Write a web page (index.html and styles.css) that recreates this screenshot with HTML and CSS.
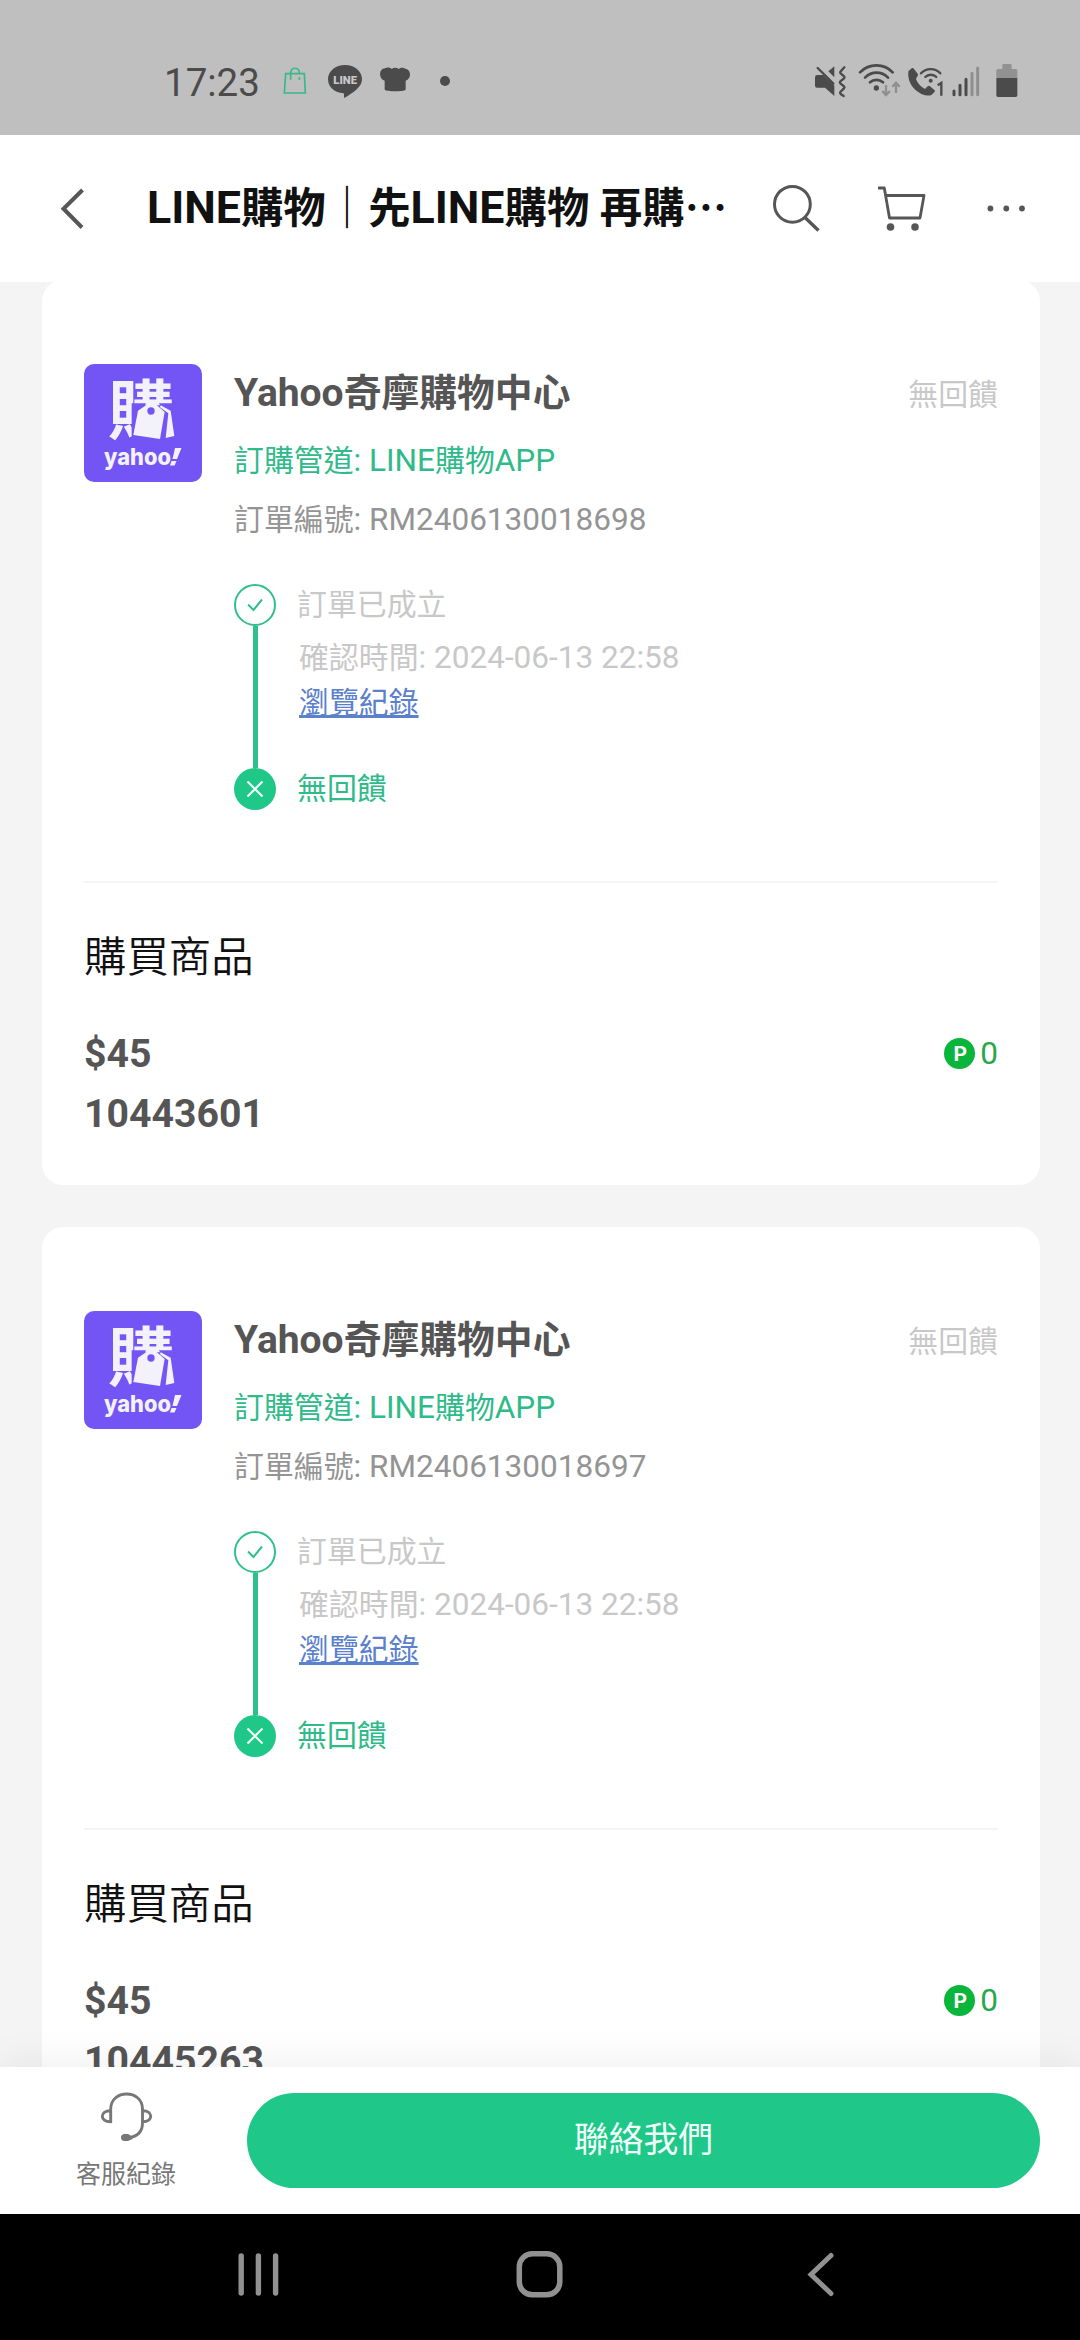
FILE: index.html
```
<!DOCTYPE html>
<html lang="zh-Hant">
<head>
<meta charset="UTF-8">
<meta name="viewport" content="width=device-width, initial-scale=1.0">
<title>LINE購物</title>
<link rel="stylesheet" href="styles.css">
</head>
<body>
    <div class="status-bar">
        <div class="clock">17:23</div>
        <svg class="ic-bag" width="26" height="40" viewBox="426 60 78 120">
            <path d="M437 101H493L496 159H433Z" fill="none" stroke="#37b98a" stroke-width="5"/>
            <path d="M452 119V99C452 80 478 80 478 99M478 111V119" fill="none" stroke="#37b98a" stroke-width="5"/>
        </svg>
        <svg class="ic-line" width="36" height="40" viewBox="561 60 108 120">
            <path d="M615 75C643 75 666 93 666 118C666 141 640 158 613 174C611 170 613 164 611 160C584 159 564 141 564 118C564 93 587 75 615 75Z" fill="#4b4b4b"/>
            <text class="line-word" x="580" y="132" textLength="71" lengthAdjust="spacingAndGlyphs">LINE</text>
        </svg>
        <svg class="ic-hat" width="32" height="40" viewBox="717 60 96 120">
            <path d="M734 149V122C715 117 716 86 735 85C742 81 751 83 755 87C761 82 770 82 776 87C782 82 791 82 796 86C814 88 815 116 797 122V149C790 155 741 155 734 149Z" fill="#4b4b4b"/>
        </svg>
        <svg class="ic-dot" width="12" height="40" viewBox="897 60 36 120"><circle cx="915" cy="123" r="15" fill="#4b4b4b"/></svg>
        <div class="status-right">
            <svg width="34" height="40" viewBox="70 60 102 120">
                <path d="M80 105H98L131 137V168L103 143H79Q73 143 73 137V112Q73 105 80 105Z" fill="#4b4b4b"/>
                <path d="M113 94L131 79V112Z" fill="#4b4b4b"/>
                <path d="M81 84L128 131" stroke="#4b4b4b" stroke-width="7" stroke-linecap="round"/>
                <path d="M161 82L150 94Q147 97 150 100L160 109Q163 112 160 115L149 124Q146 127 149 130L160 139Q163 142 160 145L149 156Q147 159 150 162L159 168" fill="none" stroke="#4b4b4b" stroke-width="7" stroke-linecap="round"/>
            </svg>
            <svg class="ic-wifi" width="43" height="40" viewBox="201 60 129 120">
                <g fill="none" stroke="#4b4b4b" stroke-width="8" stroke-linecap="round">
                    <path d="M207 97C234 69 279 69 305 97M222 113C242 93 272 93 291 113M237 127C248 117 265 117 276 127"/>
                </g>
                <circle cx="256" cy="144" r="8" fill="#4b4b4b"/>
                <path d="M285 135V163M274 153L285 165L297 153M315 159V130M304 140L315 128L326 140" fill="none" stroke="#8f8f8f" stroke-width="7"/>
            </svg>
            <svg class="ic-call" width="38" height="40" viewBox="349 60 114 120">
                <path d="M353 94L363 85Q367 83 370 87L381 101Q384 105 380 109L376 117Q382 135 403 147L411 139Q414 136 418 139L432 151Q434 154 431 157L423 164Q412 170 392 162Q349 139 353 94Z" fill="#4b4b4b"/>
                <path d="M391 100C405 83 435 83 449 100M404 111C412 102 429 102 437 111" fill="none" stroke="#4b4b4b" stroke-width="7" stroke-linecap="round"/>
                <circle cx="420" cy="122" r="6" fill="#4b4b4b"/>
                <path d="M441 136L452 129V167" fill="none" stroke="#4b4b4b" stroke-width="7"/>
            </svg>
            <svg class="ic-signal" width="28" height="40" viewBox="485 60 84 120" stroke-width="9" stroke-linecap="round">
                <path d="M491 153V164M509 136V164M527 118V164" stroke="#4b4b4b"/>
                <path d="M545 100V164M562 84V164" stroke="#8f8f8f"/>
            </svg>
            <svg class="ic-battery" width="22" height="40" viewBox="617 60 66 120">
                <path d="M636 87V75Q636 72 640 72H660Q664 72 664 75V87H677Q681 87 681 92V114H618V92Q618 87 622 87Z" fill="#929292"/>
                <path d="M618 114H681V166Q681 171 676 171H623Q618 171 618 166Z" fill="#4b4b4b"/>
            </svg>
        </div>
    </div>

    <div class="header">
        <svg class="ic-back" width="30" height="50" viewBox="58 184 30 50">
            <path d="M82.5 190L63.5 208.7L82 227.5" fill="none" stroke="#565656" stroke-width="4"/>
        </svg>
        <div class="title"><span class="en">LINE</span>購物｜先<span class="en">LINE</span>購物 再購<span class="dots">…</span></div>
        <div class="header-icons">
            <svg width="54" height="50" viewBox="770 184 54 50" fill="none" stroke="#565656">
                <circle cx="792.4" cy="204.3" r="17.9" stroke-width="3"/>
                <path d="M805 217.5L818.5 230.5" stroke-width="3.4"/>
            </svg>
            <svg class="ic-cart" width="54" height="50" viewBox="874 184 54 50">
                <path d="M878 188H884.3L889.5 218H920L924 195.5H886" fill="none" stroke="#565656" stroke-width="2.8" stroke-linejoin="round"/>
                <circle cx="890.5" cy="227" r="3.8" fill="#565656"/>
                <circle cx="915" cy="227" r="3.8" fill="#565656"/>
            </svg>
            <svg class="ic-more" width="44" height="50" viewBox="984 184 44 50" fill="#565656">
                <circle cx="990.4" cy="208.5" r="2.9"/>
                <circle cx="1006.3" cy="208.5" r="2.9"/>
                <circle cx="1022" cy="208.5" r="2.9"/>
            </svg>
        </div>
    </div>

    <div class="content">
        <div class="card">
            <div class="order">
                <svg class="logo" width="118" height="118" viewBox="0 0 118 118">
                    <rect width="118" height="118" rx="10" fill="#7355f6"/>
                    <text class="logo-char" x="24" y="70" textLength="66" lengthAdjust="spacingAndGlyphs">購</text>
                    <g transform="scale(.3333) translate(-42 -42)">
                        <path d="M185 160H330V280H185Z" fill="#7355f6"/>
                        <path d="M230 150H262L270 166H226Z" fill="#f3f1fa"/>
                        <path d="M229 165L260 165L284 186L270 267L190 255L204 182Z" fill="#f3f1fa"/>
                        <path d="M272 166L302 182L313 258L287 264L295 190L270 172Z" fill="#f3f1fa"/>
                        <circle cx="243" cy="183" r="11" fill="#7355f6"/>
                    </g>
                    <text class="logo-name" x="20" y="101" textLength="67" lengthAdjust="spacingAndGlyphs">yahoo</text>
                    <path d="M91 84H97.5L93 95H88.5ZM87.5 97H92.5L90.5 101.5H86Z" fill="#f3f1fa"/>
                </svg>
                <div class="order-info">
                    <div class="shop-row">
                        <div class="shop"><span class="en">Yahoo</span>奇摩購物中心</div>
                        <div class="state">無回饋</div>
                    </div>
                    <div class="channel">訂購管道<span class="en">: LINE</span>購物<span class="en">APP</span></div>
                    <div class="number">訂單編號<span class="en">: RM2406130018698</span></div>
                    <div class="step">
                        <div class="step-mark">
                            <svg width="42" height="42">
                                <circle cx="21" cy="21" r="20" fill="#fff" stroke="#2fc08a" stroke-width="2"/>
                                <path d="M14 20.5L19.5 26L28 15.5" fill="none" stroke="#2fc08a" stroke-width="2"/>
                            </svg>
                            <div class="step-line"></div>
                        </div>
                        <div class="step-body">
                            <div class="step-title">訂單已成立</div>
                            <div class="step-time">確認時間<span class="en">: 2024-06-13 22:58</span></div>
                            <a class="step-link">瀏覽紀錄</a>
                        </div>
                    </div>
                    <div class="step last">
                        <div class="step-mark">
                            <svg width="42" height="42">
                                <circle cx="21" cy="21" r="21" fill="#1fc788"/>
                                <path d="M13.5 13.5L28.5 28.5M28.5 13.5L13.5 28.5" stroke="#effff9" stroke-width="2.2"/>
                            </svg>
                        </div>
                        <div class="step-body">
                            <div class="step-title">無回饋</div>
                        </div>
                    </div>
                </div>
            </div>
            <div class="items">
                <div class="items-title">購買商品</div>
                <div class="item-row">
                    <div class="price">$45</div>
                    <div class="points">
                        <svg width="31" height="31">
                            <circle cx="15.5" cy="15.5" r="15.5" fill="#09b53b"/>
                            <text class="point-p" x="9.4" y="23.3">P</text>
                        </svg>
                        <span class="en">0</span>
                    </div>
                </div>
                <div class="item-name">10443601</div>
            </div>
        </div>

        <div class="card">
            <div class="order">
                <svg class="logo" width="118" height="118" viewBox="0 0 118 118">
                    <rect width="118" height="118" rx="10" fill="#7355f6"/>
                    <text class="logo-char" x="24" y="70" textLength="66" lengthAdjust="spacingAndGlyphs">購</text>
                    <g transform="scale(.3333) translate(-42 -42)">
                        <path d="M185 160H330V280H185Z" fill="#7355f6"/>
                        <path d="M230 150H262L270 166H226Z" fill="#f3f1fa"/>
                        <path d="M229 165L260 165L284 186L270 267L190 255L204 182Z" fill="#f3f1fa"/>
                        <path d="M272 166L302 182L313 258L287 264L295 190L270 172Z" fill="#f3f1fa"/>
                        <circle cx="243" cy="183" r="11" fill="#7355f6"/>
                    </g>
                    <text class="logo-name" x="20" y="101" textLength="67" lengthAdjust="spacingAndGlyphs">yahoo</text>
                    <path d="M91 84H97.5L93 95H88.5ZM87.5 97H92.5L90.5 101.5H86Z" fill="#f3f1fa"/>
                </svg>
                <div class="order-info">
                    <div class="shop-row">
                        <div class="shop"><span class="en">Yahoo</span>奇摩購物中心</div>
                        <div class="state">無回饋</div>
                    </div>
                    <div class="channel">訂購管道<span class="en">: LINE</span>購物<span class="en">APP</span></div>
                    <div class="number">訂單編號<span class="en">: RM2406130018697</span></div>
                    <div class="step">
                        <div class="step-mark">
                            <svg width="42" height="42">
                                <circle cx="21" cy="21" r="20" fill="#fff" stroke="#2fc08a" stroke-width="2"/>
                                <path d="M14 20.5L19.5 26L28 15.5" fill="none" stroke="#2fc08a" stroke-width="2"/>
                            </svg>
                            <div class="step-line"></div>
                        </div>
                        <div class="step-body">
                            <div class="step-title">訂單已成立</div>
                            <div class="step-time">確認時間<span class="en">: 2024-06-13 22:58</span></div>
                            <a class="step-link">瀏覽紀錄</a>
                        </div>
                    </div>
                    <div class="step last">
                        <div class="step-mark">
                            <svg width="42" height="42">
                                <circle cx="21" cy="21" r="21" fill="#1fc788"/>
                                <path d="M13.5 13.5L28.5 28.5M28.5 13.5L13.5 28.5" stroke="#effff9" stroke-width="2.2"/>
                            </svg>
                        </div>
                        <div class="step-body">
                            <div class="step-title">無回饋</div>
                        </div>
                    </div>
                </div>
            </div>
            <div class="items">
                <div class="items-title">購買商品</div>
                <div class="item-row">
                    <div class="price">$45</div>
                    <div class="points">
                        <svg width="31" height="31">
                            <circle cx="15.5" cy="15.5" r="15.5" fill="#09b53b"/>
                            <text class="point-p" x="9.4" y="23.3">P</text>
                        </svg>
                        <span class="en">0</span>
                    </div>
                </div>
                <div class="item-name">10445263</div>
            </div>
        </div>
    </div>

    <div class="footer">
        <div class="service">
            <svg width="56" height="54" viewBox="98 2090 56 54">
                <path d="M110.7 2123V2109C110.7 2089 142.5 2089 142.5 2109V2123C142.5 2132 138 2136 128 2138M110.7 2110.8C99.5 2110.5 99.5 2122 110.7 2121.7M142.5 2110.8C153.5 2110.5 153.5 2122 142.5 2121.7" fill="none" stroke="#777" stroke-width="2.9"/>
                <path d="M124 2134H128L132.5 2136.5V2139L128 2141H124Q121 2140.5 121 2137.5Q121 2134.5 124 2134Z" fill="#777"/>
            </svg>
            <div class="service-label">客服紀錄</div>
        </div>
        <div class="contact">聯絡我們</div>
    </div>

    <div class="nav-bar">
        <svg width="46" height="50" viewBox="235 2250 46 50" stroke="#919191" stroke-width="5.4" stroke-linecap="round">
            <path d="M241.2 2256V2293M258.4 2256V2293M275.6 2256V2293"/>
        </svg>
        <svg class="ic-home" width="50" height="50" viewBox="514 2250 50 50">
            <rect x="519.3" y="2253.8" width="40.5" height="41" rx="13" fill="none" stroke="#919191" stroke-width="5.5"/>
        </svg>
        <svg class="ic-return" width="30" height="50" viewBox="805 2250 30 50">
            <path d="M831 2255.5L811 2274.5L831 2293.5" fill="none" stroke="#919191" stroke-width="5" stroke-linecap="round"/>
        </svg>
    </div>
</body>
</html>
```
FILE: styles.css
```
* {
    box-sizing: border-box;
}
body {
    margin: 0;
    width: 1080px;
    height: 2340px;
    overflow: hidden;
    display: flex;
    flex-direction: column;
    background-color: #f4f4f4;
    color: #555;
    font-family: Roboto, "Noto Sans CJK TC", sans-serif;
    font-size: 29.9px;
}
svg {
    display: block;
    flex: none;
}
/* latin runs sit slightly larger than the chinese text */
.en {
    font-size: 1.055em;
}

/* status bar */
.status-bar {
    flex: none;
    height: 135px;
    padding: 60px 62px 0 164px;
    display: flex;
    background-color: #bfbfbf;
}
.clock {
    width: 118px;
    line-height: 45px;
    font-size: 38.5px;
    color: #4b4b4b;
    white-space: nowrap;
}
.ic-line {
    margin-left: 19px;
}
.ic-hat {
    margin-left: 16px;
}
.ic-dot {
    margin-left: 28px;
}
.line-word {
    font-size: 34px;
    font-weight: 900;
    fill: #c8c8c8;
}
.status-right {
    margin-left: auto;
    display: flex;
}
.ic-wifi {
    margin-left: 10px;
}
.ic-call {
    margin-left: 6px;
}
.ic-signal {
    margin-left: 7px;
}
.ic-battery {
    margin-left: 16px;
}

/* header */
.header {
    flex: none;
    height: 147px;
    padding: 0 52px 0 58px;
    display: flex;
    align-items: center;
    background-color: #fff;
    position: relative;
    z-index: 1;
}
.title {
    margin: -3px 0 0 59px;
    line-height: 60px;
    font-size: 42.4px;
    font-weight: bold;
    color: #111;
    white-space: nowrap;
}
.dots {
    font-family: "Noto Sans CJK TC", sans-serif;
}
.header-icons {
    margin-left: auto;
    display: flex;
}
.ic-cart {
    margin-left: 50px;
}
.ic-more {
    margin-left: 56px;
}

/* order cards */
.content {
    flex: 1;
    min-height: 0;
    overflow: hidden;
    margin-top: -2px;
    padding: 0 40px 0 42px;
}
.card {
    height: 905px;
    margin-bottom: 42px;
    padding: 84px 42px 42px;
    border-radius: 21px;
    background-color: #fff;
}
.order {
    display: flex;
    height: 517px;
}
.order-info {
    flex: 1;
    margin-left: 32px;
}
.logo-char {
    font-family: "Noto Sans CJK TC", sans-serif;
    font-size: 65px;
    font-weight: bold;
    fill: #f3f1fa;
}
.logo-name {
    font-family: Inter, sans-serif;
    font-size: 23.5px;
    font-weight: 800;
    fill: #f3f1fa;
}
.shop-row {
    display: flex;
    justify-content: space-between;
    line-height: 58px;
    height: 58px;
    margin-bottom: 9px;
}
.shop {
    font-size: 37.8px;
    font-weight: bold;
}
.shop .en {
    font-size: 39px;
}
.state {
    line-height: 62px;
    color: #c8c8c8;
}
.channel {
    height: 59px;
    line-height: 59px;
    color: #2fba89;
}
.number {
    height: 59px;
    line-height: 59px;
    color: #949494;
    margin-bottom: 35px;
}
.step {
    display: flex;
    height: 184px;
    color: #c8c8c8;
}
.step-mark {
    width: 42px;
    display: flex;
    flex-direction: column;
    align-items: center;
}
.step-line {
    flex: 1;
    width: 5px;
    background-color: #2cc18a;
}
.step-body {
    margin-left: 21px;
}
.step-title {
    line-height: 42px;
}
.step-time {
    margin: 9px 0 0 2px;
    height: 46px;
    line-height: 46px;
}
.step-link {
    display: block;
    width: max-content;
    margin-left: 2px;
    line-height: 44px;
    color: #5b80cc;
    text-decoration: underline;
    text-decoration-thickness: 3px;
    text-decoration-skip-ink: none;
    text-underline-offset: 2px;
}
.step.last {
    height: 42px;
    color: #2fba89;
}
.items {
    border-top: 2px solid #f4f4f4;
    padding-top: 45px;
}
.items-title {
    line-height: 60px;
    font-size: 42.4px;
    font-weight: 350;
    color: #111;
    margin-bottom: 36px;
}
.item-row {
    display: flex;
    justify-content: space-between;
    align-items: center;
    height: 60px;
}
.price,
.item-name {
    line-height: 60px;
    font-size: 39.2px;
    font-weight: bold;
}
.points {
    display: flex;
    align-items: center;
    gap: 5px;
    height: 60px;
    line-height: 58px;
    margin-top: -1px;
    color: #26a84b;
}
.point-p {
    font-size: 21px;
    font-weight: bold;
    fill: #fff;
}

/* bottom bar */
.footer {
    flex: none;
    height: 147px;
    padding: 0 40px 0 42px;
    display: flex;
    align-items: center;
    background-color: #fff;
    box-shadow: 0 0 42px rgba(0, 0, 0, .08);
    position: relative;
}
.service {
    width: 168px;
    margin-top: 4px;
    display: flex;
    flex-direction: column;
    align-items: center;
}
.service-label {
    margin-top: 11px;
    line-height: 40px;
    font-size: 25px;
    color: #777;
}
.contact {
    flex: 1;
    margin-left: 37px;
    height: 95px;
    line-height: 95px;
    border-radius: 48px;
    background-color: #1fc788;
    color: #effff9;
    font-size: 34.8px;
    text-align: center;
}

/* system navigation */
.nav-bar {
    flex: none;
    height: 126px;
    padding: 0 0 5px 235px;
    display: flex;
    align-items: center;
    background-color: #000;
    position: relative;
}
.ic-home {
    margin-left: 233px;
}
.ic-return {
    margin-left: 241px;
}
```
